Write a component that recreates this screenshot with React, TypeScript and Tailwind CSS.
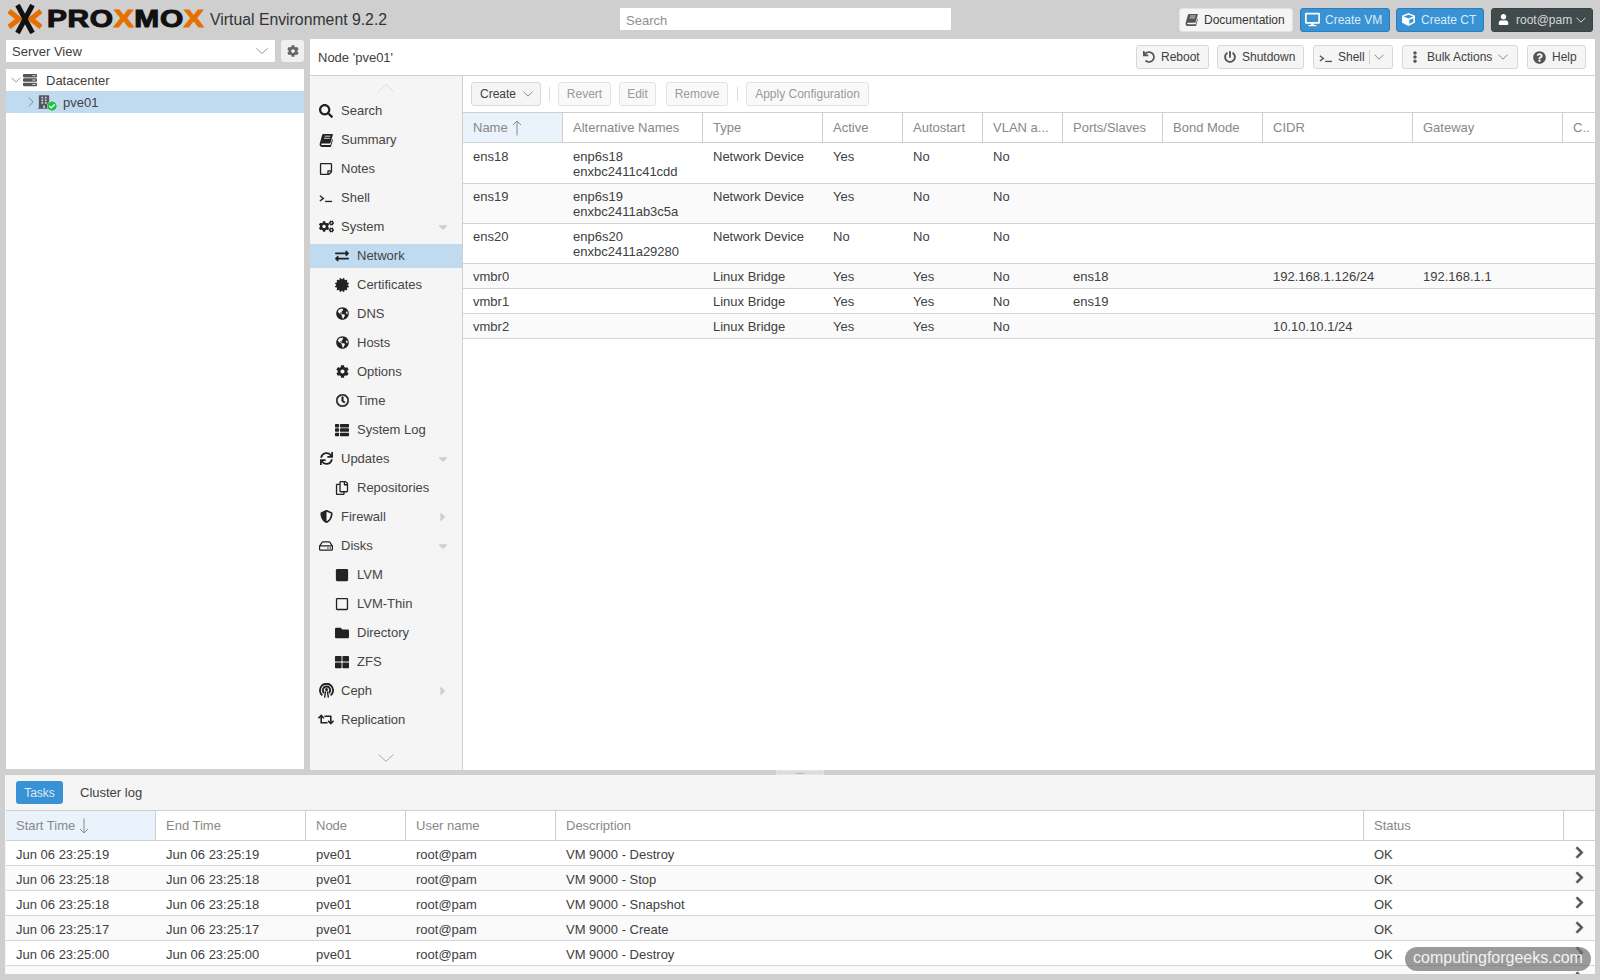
import React from "react";
import {
  FaSearch, FaRegStickyNote, FaCogs, FaExchangeAlt, FaCertificate, FaGlobeAmericas, FaCog, FaRegClock, FaThList,
  FaSync, FaRegCopy, FaShieldAlt, FaRegHdd, FaSquare, FaRegSquare, FaFolder, FaThLarge, FaRetweet, FaDesktop,
  FaCube, FaUser, FaUndo, FaPowerOff, FaEllipsisV, FaQuestionCircle, FaChevronRight, FaCaretDown, FaCaretRight,
  FaServer, FaBuilding, FaCheckCircle,
} from "react-icons/fa";

const Prompt = ({ className = "" }: { className?: string }) => (
  <svg viewBox="0 0 16 12" className={className} fill="none" stroke="currentColor" strokeWidth="1.5">
    <path d="M1 4l4 3-4 3" />
    <path d="M7 10.5h8" />
  </svg>
);

const Book = ({ className = "" }: { className?: string }) => (
  <svg viewBox="0 0 14 14" className={className} fill="currentColor">
    <path d="M4.2 1h9.3c.4 0 .5.3.4.6l-2.4 8.2c-.1.4-.4.6-.8.6H3.2c-.8 0-1.1.5-.9 1 .1.4.5.7 1 .7h8.2l1.7-6 .7.6-1.8 6.6c-.1.4-.4.7-.8.7H3.2c-1.5 0-2.6-1.1-2.6-2.5 0-.3 0-.5.1-.7l2.5-9c.1-.5.5-.8 1-.8z" />
    <path d="M5.6 3.2h5.8M5 5.3h5.8" stroke="#f5f5f5" strokeWidth=".8" fill="none" />
  </svg>
);

const Ceph = ({ className = "" }: { className?: string }) => (
  <svg viewBox="0 0 16 16" className={className} fill="none" stroke="currentColor" strokeWidth="2">
    <path d="M3.6 13.2A7 7 0 1 1 12.4 13.2" />
    <path d="M5.4 10.6A3.9 3.9 0 1 1 10.6 10.6" />
    <circle cx="8" cy="7" r="1.6" fill="currentColor" stroke="none" />
    <path d="M7 9l-1 6.5M9 9l1 6.5" strokeWidth="1.5" />
  </svg>
);

const ThinChevron = ({ up, className = "" }: { up?: boolean; className?: string }) => (
  <svg viewBox="0 0 16 8" className={`w-4 h-2 ${className}`} fill="none" stroke="currentColor" strokeWidth="1">
    <path d={up ? "M0.5 7.5L8 0.7l7.5 6.8" : "M0.5 0.5L8 7.3l7.5-6.8"} />
  </svg>
);

const Caret = ({ className = "" }: { className?: string }) => (
  <svg viewBox="0 0 10 6" className={`w-[10px] h-[6px] shrink-0 ${className}`} fill="none" stroke="currentColor" strokeWidth="1">
    <path d="M0.5 0.7L5 5.2l4.5-4.5" />
  </svg>
);

const CaretRight = ({ className = "" }: { className?: string }) => (
  <svg viewBox="0 0 6 10" className={`w-[6px] h-[10px] shrink-0 ${className}`} fill="none" stroke="currentColor" strokeWidth="1">
    <path d="M0.7 0.5L5.2 5 0.7 9.5" />
  </svg>
);

const SortArrow = ({ down }: { down?: boolean }) => (
  <svg viewBox="0 0 10 16" className="w-[10px] h-4 ml-[4px] shrink-0 text-[#888]" fill="none" stroke="currentColor" strokeWidth="1">
    <path d={down ? "M5 0.5v14.500M1 11l4 4 4-4" : "M5 15.500V1M1 5l4-4 4 4"} />
  </svg>
);

const LogoMark = () => (
  <svg viewBox="0 0 34 30" className="w-[34px] h-[30px] shrink-0">
    <path d="M1 7l10 8L1 23" fill="none" stroke="#e57000" strokeWidth="5.2" />
    <path d="M33 7L23 15 33 23" fill="none" stroke="#e57000" strokeWidth="5.2" />
    <path d="M9.5 1l15 28M24.5 1l-15 28" fill="none" stroke="#111" strokeWidth="5" />
  </svg>
);

const TopBtn = ({ cls, icon, label, caret }: { cls: string; icon: React.ReactNode; label: string; caret?: boolean }) => (
  <div className={`h-6 rounded-[3px] border flex items-center text-[12px] shrink-0 ${cls}`}>
    <span className="w-[15px] flex justify-center shrink-0">{icon}</span>
    <span className="ml-[5px] whitespace-nowrap">{label}</span>
    {caret && <Caret className="ml-[4px]" />}
  </div>
);

const menu: { icon: React.ReactNode; label: string; sub?: boolean; arrow?: "down" | "right"; active?: boolean }[] = [
  { icon: <FaSearch />, label: "Search" },
  { icon: <Book className="w-[14px] h-[14px]" />, label: "Summary" },
  { icon: <FaRegStickyNote />, label: "Notes" },
  { icon: <Prompt className="w-[14px] h-[11px]" />, label: "Shell" },
  { icon: <FaCogs className="text-[15px]" />, label: "System", arrow: "down" },
  { icon: <FaExchangeAlt />, label: "Network", sub: true, active: true },
  { icon: <FaCertificate />, label: "Certificates", sub: true },
  { icon: <FaGlobeAmericas className="text-[13px]" />, label: "DNS", sub: true },
  { icon: <FaGlobeAmericas className="text-[13px]" />, label: "Hosts", sub: true },
  { icon: <FaCog className="text-[13px]" />, label: "Options", sub: true },
  { icon: <FaRegClock className="text-[13px] stroke-[24px]" />, label: "Time", sub: true },
  { icon: <FaThList />, label: "System Log", sub: true },
  { icon: <FaSync className="text-[13px]" />, label: "Updates", arrow: "down" },
  { icon: <FaRegCopy />, label: "Repositories", sub: true },
  { icon: <FaShieldAlt className="text-[13px]" />, label: "Firewall", arrow: "right" },
  { icon: <FaRegHdd />, label: "Disks", arrow: "down" },
  { icon: <FaSquare />, label: "LVM", sub: true },
  { icon: <FaRegSquare />, label: "LVM-Thin", sub: true },
  { icon: <FaFolder />, label: "Directory", sub: true },
  { icon: <FaThLarge />, label: "ZFS", sub: true },
  { icon: <Ceph className="w-[15px] h-[15px]" />, label: "Ceph", arrow: "right" },
  { icon: <FaRetweet className="text-[17px]" />, label: "Replication" },
];

const netCols = ["Name", "Alternative Names", "Type", "Active", "Autostart", "VLAN a...", "Ports/Slaves", "Bond Mode", "CIDR", "Gateway", "C.."];
const netRows = [
  { cls: "h-[41px] pt-[6px]", c: ["ens18", "enp6s18\nenxbc2411c41cdd", "Network Device", "Yes", "No", "No", "", "", "", "", ""] },
  { cls: "h-[40px] pt-[5px] bg-[#fafafa]", c: ["ens19", "enp6s19\nenxbc2411ab3c5a", "Network Device", "Yes", "No", "No", "", "", "", "", ""] },
  { cls: "h-[40px] pt-[5px]", c: ["ens20", "enp6s20\nenxbc2411a29280", "Network Device", "No", "No", "No", "", "", "", "", ""] },
  { cls: "h-[25px] pt-[5px] bg-[#fafafa]", c: ["vmbr0", "", "Linux Bridge", "Yes", "Yes", "No", "ens18", "", "192.168.1.126/24", "192.168.1.1", ""] },
  { cls: "h-[25px] pt-[5px]", c: ["vmbr1", "", "Linux Bridge", "Yes", "Yes", "No", "ens19", "", "", "", ""] },
  { cls: "h-[25px] pt-[5px] bg-[#fafafa]", c: ["vmbr2", "", "Linux Bridge", "Yes", "Yes", "No", "", "", "10.10.10.1/24", "", ""] },
];
const netGrid = "grid grid-cols-[100px_140px_120px_80px_80px_80px_100px_100px_150px_150px_32px]";

const taskCols = ["Start Time", "End Time", "Node", "User name", "Description", "Status", ""];
const tasks = [
  ["Jun 06 23:25:19", "VM 9000 - Destroy"],
  ["Jun 06 23:25:18", "VM 9000 - Stop"],
  ["Jun 06 23:25:18", "VM 9000 - Snapshot"],
  ["Jun 06 23:25:17", "VM 9000 - Create"],
  ["Jun 06 23:25:00", "VM 9000 - Destroy"],
];
const taskGrid = "grid grid-cols-[150px_150px_100px_150px_808px_200px_31px]";

const Disabled = ({ cls, label }: { cls: string; label: string }) => (
  <div className={`h-6 rounded-[3px] border border-[#e3e3e3] bg-[#f9f9f9] text-[#9a9a9a] text-[12px] flex items-center justify-center shrink-0 ${cls}`}>{label}</div>
);

export default function App() {
  return (
    <div className="relative w-[1600px] h-[980px] overflow-hidden bg-[#cfcfcf] flex flex-col font-['Liberation_Sans',Arial,sans-serif] text-[13px] text-[#404040]">
      {/* Header */}
      <header className="h-[39px] shrink-0 flex items-center pl-2 pr-[7px]">
        <div className="w-[202px] flex items-center shrink-0 -mt-[1px]">
          <LogoMark />
          <div className="ml-[5px] origin-left scale-x-[1.3] text-[23px] leading-none font-bold tracking-[0.5px] whitespace-nowrap text-[#111] [-webkit-text-stroke:1px_#111]">
            PRO<span className="text-[#e57000] [-webkit-text-stroke:1px_#e57000]">X</span>MO<span className="text-[#e57000] [-webkit-text-stroke:1px_#e57000]">X</span>
          </div>
        </div>
        <div className="w-[410px] shrink-0 text-[15.8px] text-[#333] whitespace-nowrap">Virtual Environment 9.2.2</div>
        <input readOnly placeholder="Search" className="w-[331px] h-[22px] shrink-0 -mt-[1px] bg-white px-[6px] pt-[2px] text-[13px] outline-none placeholder:text-[#909090]" />
        <div className="flex-1 flex justify-end items-center">
          <TopBtn cls="w-[114px] pl-[4px] border-[#e2e2e2] bg-[#f5f5f5] text-[#333]" icon={<Book className="w-[13px] h-[13px] text-[#555]" />} label="Documentation" />
          <TopBtn cls="w-[90px] ml-[7px] pl-[4px] border-[#2d7fbb] bg-[#3892d4] text-[#d9ebf9]" icon={<FaDesktop className="text-[15px] text-white" />} label="Create VM" />
          <TopBtn cls="w-[88px] ml-[6px] pl-[4px] border-[#2d7fbb] bg-[#3892d4] text-[#d9ebf9]" icon={<FaCube className="text-[13px] text-white" />} label="Create CT" />
          <TopBtn cls="w-[102px] ml-[7px] pl-[4px] border-[#394343] bg-[#414b4b] text-[#d8d8d8]" icon={<FaUser className="text-[11px] text-white" />} label="root@pam" caret />
        </div>
      </header>

      {/* Upper area */}
      <div className="h-[731px] shrink-0 flex pl-[6px] pr-[5px]">
        <aside className="w-[298px] shrink-0 flex flex-col">
          <div className="h-[22px] mt-[1px] flex justify-between shrink-0">
            <div className="w-[269px] bg-white flex items-center justify-between pl-[6px] pr-[5px]">
              <span className="pt-[1px]">Server View</span>
              <ThinChevron className="w-3 h-[6px] text-[#777]" />
            </div>
            <div className="w-[23px] rounded-[3px] bg-[#f0f0f0] flex items-center justify-center">
              <FaCog className="text-[12px] text-[#666]" />
            </div>
          </div>
          <div className="mt-[7px] h-[700px] bg-white shrink-0">
            <div className="h-[22px] flex items-center pl-[5px]">
              <Caret className="text-[#999]" />
              <FaServer className="ml-[1px] w-[16px] h-[14px] text-[#555]" />
              <span className="ml-[8px] pt-[1px]">Datacenter</span>
            </div>
            <div className="h-[22px] flex items-center pl-[22px] bg-[#c0dbf0]">
              <CaretRight className="text-[#888]" />
              <span className="relative ml-[4px] w-[12px] h-[16px] flex">
                <FaBuilding className="w-[12px] h-[16px] text-[#555]" />
                <FaCheckCircle className="absolute -right-[7px] -bottom-[1px] w-[10px] h-[10px] text-[#21bf4b] bg-white rounded-full" />
              </span>
              <span className="ml-[13px] pt-[1px]">pve01</span>
            </div>
          </div>
        </aside>

        <main className="ml-[6px] flex-1 min-w-0 bg-white flex flex-col">
          <div className="h-[37px] shrink-0 border-b border-[#cfcfcf] flex items-center pl-2 pr-[9px]">
            <div className="flex-1 text-[13px] pt-[1px]">Node 'pve01'</div>
            <TopBtn cls="w-[73px] pl-[4px] border-[#d8d8d8] bg-[#f5f5f5]" icon={<FaUndo className="text-[12px] text-[#555]" />} label="Reboot" />
            <TopBtn cls="w-[87px] ml-2 pl-[4px] border-[#d8d8d8] bg-[#f5f5f5]" icon={<FaPowerOff className="text-[12px] text-[#555]" />} label="Shutdown" />
            <div className="w-[80px] h-6 ml-[9px] rounded-[3px] border border-[#d8d8d8] bg-[#f5f5f5] flex items-center text-[12px] shrink-0">
              <span className="ml-[4px] w-[15px] flex justify-center"><Prompt className="w-[14px] h-[11px] text-[#555]" /></span>
              <span className="ml-[5px]">Shell</span>
              <span className="ml-[4px] w-px h-[14px] bg-[#d5d5d5]" />
              <Caret className="ml-[4px] text-[#888]" />
            </div>
            <div className="w-[116px] h-6 ml-[9px] rounded-[3px] border border-[#d8d8d8] bg-[#f5f5f5] flex items-center text-[12px] shrink-0">
              <span className="ml-[4px] w-[15px] flex justify-center"><FaEllipsisV className="text-[12px] text-[#555]" /></span>
              <span className="ml-[5px] whitespace-nowrap">Bulk Actions</span>
              <Caret className="ml-[6px] text-[#888]" />
            </div>
            <TopBtn cls="w-[59px] ml-[9px] pl-[4px] border-[#d8d8d8] bg-[#f5f5f5]" icon={<FaQuestionCircle className="text-[13px] text-[#555]" />} label="Help" />
          </div>

          <div className="flex-1 min-h-0 flex">
            <nav className="w-[153px] shrink-0 border-r border-[#cfcfcf] bg-[#f5f5f5] flex flex-col">
              <div className="h-[20px] shrink-0 flex items-center justify-center pt-[4px]">
                <ThinChevron up className="text-[#ddd]" />
              </div>
              {menu.map((m) => (
                <div key={m.label} className="h-[29px] shrink-0 flex items-center">
                  <div className={`h-6 w-full flex items-center ${m.sub ? "pl-[24px]" : "pl-2"} ${m.active ? "bg-[#c0dbf0]" : ""}`}>
                    <span className="w-4 flex items-center justify-center text-[14px] text-[#222] shrink-0">{m.icon}</span>
                    <span className="ml-[7px] text-[#444] whitespace-nowrap">{m.label}</span>
                    {m.arrow && (
                      <span className="ml-auto mr-3 text-[14px] text-[#cfcfcf]">
                        {m.arrow === "down" ? <FaCaretDown /> : <FaCaretRight />}
                      </span>
                    )}
                  </div>
                </div>
              ))}
              <div className="mt-auto h-[25px] flex items-center justify-center">
                <ThinChevron className="text-[#aaa]" />
              </div>
            </nav>

            <section className="flex-1 min-w-0 flex flex-col">
              <div className="h-[37px] shrink-0 border-b border-[#cfcfcf] flex items-center pl-2 pb-[1px]">
                <div className="w-[70px] h-6 rounded-[3px] border border-[#d8d8d8] bg-[#f5f5f5] flex items-center pl-2 text-[12px] shrink-0">
                  Create
                  <Caret className="ml-[7px] text-[#888]" />
                </div>
                <span className="w-px h-[14px] bg-[#ddd] ml-2 mr-2" />
                <Disabled cls="w-[53px]" label="Revert" />
                <Disabled cls="w-[37px] ml-2" label="Edit" />
                <Disabled cls="w-[62px] ml-[10px]" label="Remove" />
                <span className="w-px h-[14px] bg-[#ddd] ml-[9px] mr-[8px]" />
                <Disabled cls="w-[123px]" label="Apply Configuration" />
              </div>
              <div className={`${netGrid} h-[30px] shrink-0 border-b border-[#cfcfcf] text-[#888]`}>
                {netCols.map((c, i) => (
                  <div key={c} className={`flex items-center pl-[10px] whitespace-nowrap overflow-hidden ${i < 10 ? "border-r border-[#cfcfcf]" : ""} ${i === 0 ? "bg-[#eaf3fb]" : ""}`}>
                    {c}
                    {i === 0 && <SortArrow />}
                  </div>
                ))}
              </div>
              {netRows.map((r) => (
                <div key={r.c[0]} className={`${netGrid} shrink-0 border-b border-[#d4d4d4] leading-[15px] ${r.cls}`}>
                  {r.c.map((v, i) => (
                    <div key={i} className="pl-[10px] whitespace-pre-line">{v}</div>
                  ))}
                </div>
              ))}
            </section>
          </div>
        </main>
      </div>

      {/* Splitter */}
      <div className="h-[5px] shrink-0 flex justify-center">
        <div className="w-[48px] border border-[#e4e4e4] bg-[#dcdcdc] flex justify-center text-[#aaa] overflow-hidden">
          <FaCaretDown className="-mt-[3px] text-[14px]" />
        </div>
      </div>

      {/* Bottom panel */}
      <div className="mx-[5px] h-[199px] shrink-0 bg-[#f5f5f5] flex flex-col overflow-hidden">
        <div className="h-[35px] shrink-0 flex items-center pl-[11px]">
          <div className="w-[47px] h-[23px] rounded-[3px] bg-[#3892d4] text-[#d9ebf9] text-[12px] flex items-center justify-center">Tasks</div>
          <div className="ml-[17px]">Cluster log</div>
        </div>
        <div className="flex-1 min-h-0 ml-px bg-white overflow-hidden border-t border-[#cfcfcf]">
          <div className={`${taskGrid} h-[30px] border-b border-[#cfcfcf] text-[#888]`}>
            {taskCols.map((c, i) => (
              <div key={i} className={`flex items-center pl-[10px] whitespace-nowrap ${i < 6 ? "border-r border-[#cfcfcf]" : ""} ${i === 0 ? "bg-[#eaf3fb]" : ""}`}>
                {c}
                {i === 0 && <SortArrow down />}
              </div>
            ))}
          </div>
          {tasks.map((t, i) => (
            <div key={i} className={`${taskGrid} h-[25px] border-b border-[#d4d4d4] items-center pt-[4px] ${i % 2 === 1 ? "bg-[#fafafa]" : ""}`}>
              <div className="pl-[10px]">{t[0]}</div>
              <div className="pl-[10px]">{t[0]}</div>
              <div className="pl-[10px]">pve01</div>
              <div className="pl-[10px]">root@pam</div>
              <div className="pl-[10px]">{t[1]}</div>
              <div className="pl-[10px]">OK</div>
              <div className="pl-[9px]"><FaChevronRight className="text-[13px] text-[#555] stroke-[30px] -mt-[6px]" /></div>
            </div>
          ))}
          <div className={`${taskGrid} h-[25px] items-center bg-[#fafafa]`}>
            <div className="col-start-7 pl-[9px]"><FaChevronRight className="text-[13px] text-[#555] stroke-[30px] -mt-[2px]" /></div>
          </div>
        </div>
      </div>

      {/* Site badge */}
      <div className="absolute left-[1405px] top-[947px] w-[186px] h-6 pb-[2px] rounded-full bg-[#6f6f6f]/70 text-[#f2f2f2] text-[16px] flex items-center justify-center whitespace-nowrap">
        computingforgeeks.com
      </div>
    </div>
  );
}
